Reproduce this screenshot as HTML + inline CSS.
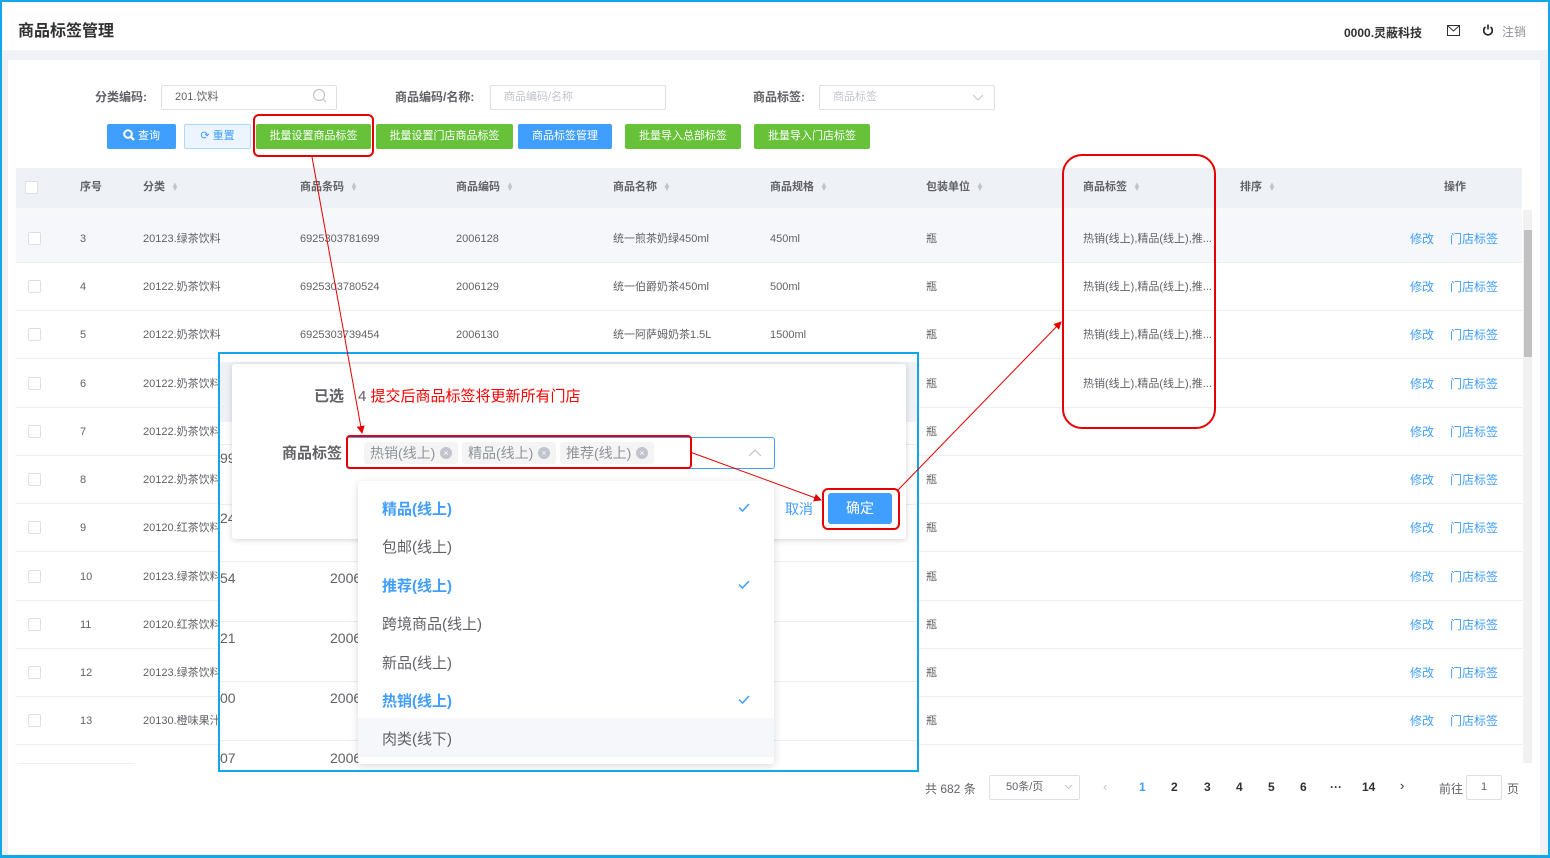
<!DOCTYPE html>
<html><head><meta charset="utf-8"><style>
*{margin:0;padding:0;box-sizing:border-box}
body{width:1550px;height:858px;position:relative;overflow:hidden;background:#fff;font-family:"Liberation Sans","Noto Sans CJK SC",sans-serif;color:#606266}
.a{position:absolute;white-space:nowrap}
.frame{position:absolute;left:0;top:0;width:1550px;height:858px;border:2px solid #11a7e8;border-bottom-width:3px;z-index:50;pointer-events:none}
.btn{position:absolute;top:124px;height:25px;color:#fff;font-size:11px;line-height:25px;text-align:center;border-radius:2px}
.g{background:#67c23a}.b{background:#409eff}
.inp{position:absolute;height:25px;border:1px solid #dcdfe6;border-radius:2px;font-size:11px;line-height:23px;padding-left:13px;color:#c0c4cc}
.lbl{position:absolute;font-size:12px;font-weight:bold;color:#606266;top:90px;line-height:14px}
.th{position:absolute;top:181px;font-size:11px;font-weight:bold;color:#606266;white-space:nowrap;line-height:13px}
.s{display:inline-block;margin-left:6px;color:#c0c4cc;font-size:8px;vertical-align:middle;line-height:4px}
.row{position:absolute;left:16px;width:1506px;height:48px;border-bottom:1px solid #ebeef5;font-size:11px;color:#606266}
.row span{position:absolute;top:17px;white-space:nowrap;line-height:14px}
.row span.lk{font-size:12px;top:17px}
.cb{position:absolute;left:12px;top:17px;width:13px;height:13px;border:1px solid #dcdfe6;border-radius:2px;background:#fff}
.lk{color:#409eff}
.pg{position:absolute;top:780px;font-size:12px;font-weight:bold;color:#303133}
.tag{position:absolute;top:88px;width:94px;height:22px;background:#f4f4f5;border-radius:3px;font-size:14px;color:#909399;line-height:22px;padding-left:6px}
.tag i{position:absolute;right:6px;top:5px;width:12px;height:12px;border-radius:50%;background:#c0c4cc;color:#fff;font-size:9px;line-height:12px;text-align:center;font-style:normal}
</style></head><body>
<div class="frame"></div>
<div class="a" style="left:18px;top:17px;font-size:16px;font-weight:bold;color:#303133">商品标签管理</div>
<div class="a" style="left:1344px;top:24px;font-size:12px;font-weight:bold;color:#303133">0000.灵蔽科技</div>
<svg class="a" style="left:1447px;top:25px" width="13" height="11" viewBox="0 0 13 11"><rect x="0.5" y="0.5" width="12" height="10" fill="none" stroke="#333"/><path d="M1 1l5.5 5 5.5-5" fill="none" stroke="#333"/></svg>
<svg class="a" style="left:1482px;top:24px" width="12" height="12" viewBox="0 0 12 12"><path d="M3.5 3a4.3 4.3 0 1 0 5 0" fill="none" stroke="#222" stroke-width="1.6"/><path d="M6 0.5v5" stroke="#222" stroke-width="1.6"/></svg>
<div class="a" style="left:1502px;top:23px;font-size:12px;color:#909399">注销</div>
<div class="a" style="left:2px;top:50px;width:1546px;height:10px;background:#f0f2f5"></div>
<div class="a" style="left:2px;top:60px;width:6px;height:796px;background:#f0f2f5"></div>
<div class="a" style="left:1540px;top:60px;width:8px;height:796px;background:#f0f2f5"></div>
<div class="lbl" style="left:95px">分类编码:</div>
<div class="inp" style="left:161px;top:85px;width:176px;color:#606266">201.饮料</div>
<svg class="a" style="left:312px;top:88px" width="16" height="16" viewBox="0 0 16 16"><circle cx="7" cy="7" r="5.5" fill="none" stroke="#c0c4cc" stroke-width="1.2"/><path d="M11 11l3 3" stroke="#c0c4cc" stroke-width="1.2"/></svg>
<div class="lbl" style="left:395px">商品编码/名称:</div>
<div class="inp" style="left:490px;top:85px;width:176px">商品编码/名称</div>
<div class="lbl" style="left:753px">商品标签:</div>
<div class="inp" style="left:819px;top:85px;width:176px">商品标签</div>
<svg class="a" style="left:972px;top:94px" width="12" height="8"><path d="M1 1l5 5 5-5" fill="none" stroke="#c0c4cc"/></svg>
<div class="btn b" style="left:107px;width:69px"><svg width="12" height="12" viewBox="0 0 12 12" style="vertical-align:-2px"><circle cx="5" cy="5" r="3.8" fill="none" stroke="#fff" stroke-width="2"/><path d="M8 8l3 3" stroke="#fff" stroke-width="2.2"/></svg> 查询</div>
<div class="btn" style="left:184px;width:67px;background:#ecf5ff;border:1px solid #b3d8ff;color:#409eff;line-height:23px">⟳ 重置</div>
<div class="btn g" style="left:256px;width:115px">批量设置商品标签</div>
<div class="btn g" style="left:376px;width:137px">批量设置门店商品标签</div>
<div class="btn b" style="left:518px;width:94px">商品标签管理</div>
<div class="btn g" style="left:625px;width:116px">批量导入总部标签</div>
<div class="btn g" style="left:754px;width:116px">批量导入门店标签</div>
<div class="a" style="left:253px;top:114px;width:121px;height:43px;border:2px solid #e60000;border-radius:6px"></div>
<div class="a" style="left:16px;top:168px;width:1506px;height:40px;background:#eef1f6"></div>
<div class="a" style="left:16px;top:208px;width:1506px;height:7px;background:#f7f8fa"></div>
<div class="a" style="left:25px;top:181px;width:13px;height:13px;border:1px solid #dcdfe6;background:#fff;border-radius:2px"></div>
<div class="th" style="left:80px">序号</div>
<div class="th" style="left:143px">分类<span class="s">▲<br>▼</span></div>
<div class="th" style="left:300px">商品条码<span class="s">▲<br>▼</span></div>
<div class="th" style="left:456px">商品编码<span class="s">▲<br>▼</span></div>
<div class="th" style="left:613px">商品名称<span class="s">▲<br>▼</span></div>
<div class="th" style="left:770px">商品规格<span class="s">▲<br>▼</span></div>
<div class="th" style="left:926px">包装单位<span class="s">▲<br>▼</span></div>
<div class="th" style="left:1083px">商品标签<span class="s">▲<br>▼</span></div>
<div class="th" style="left:1240px">排序<span class="s">▲<br>▼</span></div>
<div class="th" style="left:1444px">操作</div>
<div class="row" style="top:215px;background:#f5f7fa"><i class="cb"></i><span style="left:64px">3</span><span style="left:127px">20123.绿茶饮料</span><span style="left:284px">6925303781699</span><span style="left:440px">2006128</span><span style="left:597px">统一煎茶奶绿450ml</span><span style="left:754px">450ml</span><span style="left:910px">瓶</span><span style="left:1067px">热销(线上),精品(线上),推...</span><span class="lk" style="left:1394px">修改</span><span class="lk" style="left:1434px">门店标签</span></div>
<div class="row" style="top:263px"><i class="cb"></i><span style="left:64px">4</span><span style="left:127px">20122.奶茶饮料</span><span style="left:284px">6925303780524</span><span style="left:440px">2006129</span><span style="left:597px">统一伯爵奶茶450ml</span><span style="left:754px">500ml</span><span style="left:910px">瓶</span><span style="left:1067px">热销(线上),精品(线上),推...</span><span class="lk" style="left:1394px">修改</span><span class="lk" style="left:1434px">门店标签</span></div>
<div class="row" style="top:311px"><i class="cb"></i><span style="left:64px">5</span><span style="left:127px">20122.奶茶饮料</span><span style="left:284px">6925303739454</span><span style="left:440px">2006130</span><span style="left:597px">统一阿萨姆奶茶1.5L</span><span style="left:754px">1500ml</span><span style="left:910px">瓶</span><span style="left:1067px">热销(线上),精品(线上),推...</span><span class="lk" style="left:1394px">修改</span><span class="lk" style="left:1434px">门店标签</span></div>
<div class="row" style="top:360px"><i class="cb"></i><span style="left:64px">6</span><span style="left:127px">20122.奶茶饮料</span><span style="left:910px">瓶</span><span style="left:1067px">热销(线上),精品(线上),推...</span><span class="lk" style="left:1394px">修改</span><span class="lk" style="left:1434px">门店标签</span></div>
<div class="row" style="top:408px"><i class="cb"></i><span style="left:64px">7</span><span style="left:127px">20122.奶茶饮料</span><span style="left:910px">瓶</span><span class="lk" style="left:1394px">修改</span><span class="lk" style="left:1434px">门店标签</span></div>
<div class="row" style="top:456px"><i class="cb"></i><span style="left:64px">8</span><span style="left:127px">20122.奶茶饮料</span><span style="left:910px">瓶</span><span class="lk" style="left:1394px">修改</span><span class="lk" style="left:1434px">门店标签</span></div>
<div class="row" style="top:504px"><i class="cb"></i><span style="left:64px">9</span><span style="left:127px">20120.红茶饮料</span><span style="left:910px">瓶</span><span class="lk" style="left:1394px">修改</span><span class="lk" style="left:1434px">门店标签</span></div>
<div class="row" style="top:553px"><i class="cb"></i><span style="left:64px">10</span><span style="left:127px">20123.绿茶饮料</span><span style="left:910px">瓶</span><span class="lk" style="left:1394px">修改</span><span class="lk" style="left:1434px">门店标签</span></div>
<div class="row" style="top:601px"><i class="cb"></i><span style="left:64px">11</span><span style="left:127px">20120.红茶饮料</span><span style="left:910px">瓶</span><span class="lk" style="left:1394px">修改</span><span class="lk" style="left:1434px">门店标签</span></div>
<div class="row" style="top:649px"><i class="cb"></i><span style="left:64px">12</span><span style="left:127px">20123.绿茶饮料</span><span style="left:910px">瓶</span><span class="lk" style="left:1394px">修改</span><span class="lk" style="left:1434px">门店标签</span></div>
<div class="row" style="top:697px"><i class="cb"></i><span style="left:64px">13</span><span style="left:127px">20130.橙味果汁</span><span style="left:910px">瓶</span><span class="lk" style="left:1394px">修改</span><span class="lk" style="left:1434px">门店标签</span></div>
<div class="a" style="left:18px;top:763px;width:116px;height:1px;background:#ebeef5"></div>
<div class="a" style="left:1523px;top:210px;width:9px;height:553px;background:#f1f1f1"></div>
<div class="a" style="left:1524px;top:230px;width:8px;height:127px;background:#c1c1c1"></div>
<div class="a" style="left:925px;top:780px;font-size:12px;color:#606266">共 682 条</div>
<div class="inp" style="left:989px;top:775px;width:91px;color:#606266;padding-left:16px">50条/页</div>
<svg class="a" style="left:1064px;top:784px" width="9" height="6"><path d="M1 1l3.5 3.5 3.5-3.5" fill="none" stroke="#c0c4cc"/></svg>
<div class="a" style="left:1103px;top:779px;font-size:13px;color:#c0c4cc">‹</div>
<div class="pg" style="left:1139px;color:#409eff">1</div>
<div class="pg" style="left:1171px">2</div>
<div class="pg" style="left:1204px">3</div>
<div class="pg" style="left:1236px">4</div>
<div class="pg" style="left:1268px">5</div>
<div class="pg" style="left:1300px">6</div>
<div class="pg" style="left:1330px">···</div>
<div class="pg" style="left:1362px">14</div>
<div class="a" style="left:1400px;top:778px;font-size:13px;color:#303133">›</div>
<div class="a" style="left:1439px;top:780px;font-size:12px">前往</div>
<div class="inp" style="left:1466px;top:775px;width:36px;color:#606266;padding-left:0;text-align:center">1</div>
<div class="a" style="left:1507px;top:780px;font-size:12px">页</div>
<div class="a" style="left:218px;top:352px;width:701px;height:420px;background:#fff;border:2px solid #11a7e8;overflow:hidden;z-index:10">
 <div class="a" style="left:0;top:8px;width:700px;height:60px;background:#eef1f6"></div>
 <div class="a" style="left:0;top:90px;width:700px;height:1px;background:#ebeef5"></div>
 <div class="a" style="left:0;top:150px;width:700px;height:1px;background:#ebeef5"></div>
 <div class="a" style="left:0;top:207px;width:700px;height:1px;background:#ebeef5"></div>
 <div class="a" style="left:0;top:267px;width:700px;height:1px;background:#ebeef5"></div>
 <div class="a" style="left:0;top:327px;width:700px;height:1px;background:#ebeef5"></div>
 <div class="a" style="left:0;top:386px;width:700px;height:1px;background:#ebeef5"></div>
 <div class="a" style="left:0;top:96px;font-size:14px">99</div>
 <div class="a" style="left:0;top:156px;font-size:14px">24</div>
 <div class="a" style="left:0;top:216px;font-size:14px">54</div><div class="a" style="left:110px;top:216px;font-size:14px">2006</div>
 <div class="a" style="left:0;top:276px;font-size:14px">21</div><div class="a" style="left:110px;top:276px;font-size:14px">2006</div>
 <div class="a" style="left:0;top:336px;font-size:14px">00</div><div class="a" style="left:110px;top:336px;font-size:14px">2006</div>
 <div class="a" style="left:0;top:396px;font-size:14px">07</div><div class="a" style="left:110px;top:396px;font-size:14px">2006</div>
 <div class="a" style="left:12px;top:10px;width:674px;height:175px;background:#fff;box-shadow:0 1px 6px rgba(0,0,0,.18);border-radius:3px"></div>
 <div class="a" style="left:94px;top:31px;font-size:15px;font-weight:bold;color:#606266">已选</div>
 <div class="a" style="left:138px;top:31px;font-size:15px;color:#606266">4 <span style="color:#f00">提交后商品标签将更新所有门店</span></div>
 <div class="a" style="left:62px;top:88px;font-size:15px;font-weight:bold;color:#606266">商品标签</div>
 <div class="a" style="left:126px;top:83px;width:429px;height:32px;border:1px solid #409eff;border-radius:3px;background:#fff"></div>
 <div class="tag" style="left:144px">热销(线上)<i>×</i></div>
 <div class="tag" style="left:242px">精品(线上)<i>×</i></div>
 <div class="tag" style="left:340px">推荐(线上)<i>×</i></div>
 <svg class="a" style="left:528px;top:94px" width="14" height="9"><path d="M1 8l6-6 6 6" fill="none" stroke="#c0c4cc" stroke-width="1.2"/></svg>
 <div class="a" style="left:126px;top:81px;width:346px;height:34px;border:2px solid #e60000;border-radius:4px"></div>
 <div class="a" style="left:565px;top:145px;font-size:14px;color:#409eff">取消</div>
 <div class="a" style="left:608px;top:139px;width:64px;height:31px;background:#409eff;border-radius:3px;color:#fff;font-size:14px;text-align:center;line-height:31px">确定</div>
 <div class="a" style="left:602px;top:134px;width:78px;height:42px;border:2px solid #e60000;border-radius:6px"></div>
 <div class="a" style="left:138px;top:127px;width:416px;height:283px;background:#fff;box-shadow:0 2px 8px rgba(0,0,0,.15);border-radius:3px"></div>
 <div class="a" style="left:138px;top:364px;width:416px;height:39px;background:#f5f7fa"></div>
 <div class="a" style="left:162px;top:144px;font-size:15px;font-weight:bold;color:#409eff">精品(线上)</div>
 <div class="a" style="left:162px;top:182px;font-size:15px;color:#606266">包邮(线上)</div>
 <div class="a" style="left:162px;top:221px;font-size:15px;font-weight:bold;color:#409eff">推荐(线上)</div>
 <div class="a" style="left:162px;top:259px;font-size:15px;color:#606266">跨境商品(线上)</div>
 <div class="a" style="left:162px;top:298px;font-size:15px;color:#606266">新品(线上)</div>
 <div class="a" style="left:162px;top:336px;font-size:15px;font-weight:bold;color:#409eff">热销(线上)</div>
 <div class="a" style="left:162px;top:374px;font-size:15px;color:#606266">肉类(线下)</div>
 <svg class="a" style="left:518px;top:149px" width="12" height="9"><path d="M1 4.5l3.5 3.5 6.5-7" fill="none" stroke="#409eff" stroke-width="1.5"/></svg>
 <svg class="a" style="left:518px;top:226px" width="12" height="9"><path d="M1 4.5l3.5 3.5 6.5-7" fill="none" stroke="#409eff" stroke-width="1.5"/></svg>
 <svg class="a" style="left:518px;top:341px" width="12" height="9"><path d="M1 4.5l3.5 3.5 6.5-7" fill="none" stroke="#409eff" stroke-width="1.5"/></svg>
</div>
<div class="a" style="left:1062px;top:154px;width:154px;height:275px;border:2px solid #e60000;border-radius:20px;z-index:20"></div>
<svg class="a" style="left:0;top:0;z-index:30" width="1550" height="858">
 <defs><marker id="m" markerWidth="8" markerHeight="8" refX="7" refY="4" orient="auto" markerUnits="userSpaceOnUse"><path d="M0 0L8 4L0 8z" fill="#e60000"/></marker></defs>
 <line x1="312" y1="157" x2="362" y2="433" stroke="#e60000" stroke-width="1" marker-end="url(#m)"/>
 <line x1="690" y1="452" x2="821" y2="500" stroke="#e60000" stroke-width="1" marker-end="url(#m)"/>
 <line x1="898" y1="490" x2="1061" y2="322" stroke="#e60000" stroke-width="1" marker-end="url(#m)"/>
</svg>
</body></html>
